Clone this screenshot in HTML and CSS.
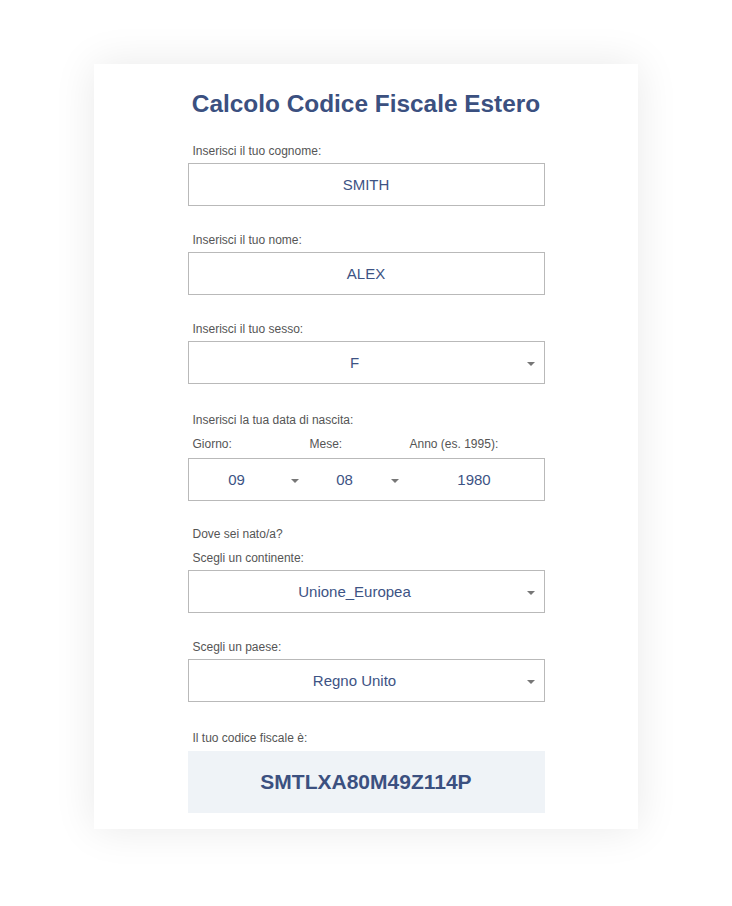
FILE: index.html
```html
<!DOCTYPE html>
<html lang="it">
<head>
<meta charset="utf-8">
<title>Calcolo Codice Fiscale Estero</title>
<link rel="stylesheet" href="styles.css">
</head>
<body>
<div class="page">
  <div class="card">
    <h1 class="title">Calcolo Codice Fiscale Estero</h1>
    <div class="form">
      <div class="group">
        <div class="label">Inserisci il tuo cognome:</div>
        <div class="field">SMITH</div>
      </div>
      <div class="group">
        <div class="label">Inserisci il tuo nome:</div>
        <div class="field">ALEX</div>
      </div>
      <div class="group group-sex">
        <div class="label">Inserisci il tuo sesso:</div>
        <div class="field select"><span class="value">F</span><span class="arrow"></span></div>
      </div>
      <div class="group group-date">
        <div class="label label-top">Inserisci la tua data di nascita:</div>
        <div class="date-labels">
          <div class="label col-d">Giorno:</div>
          <div class="label col-m">Mese:</div>
          <div class="label col-y">Anno (es. 1995):</div>
        </div>
        <div class="field date">
          <div class="col-d sub select"><span class="value">09</span><span class="arrow"></span></div>
          <div class="col-m sub select"><span class="value">08</span><span class="arrow"></span></div>
          <div class="col-y sub"><span class="value">1980</span></div>
        </div>
      </div>
      <div class="group">
        <div class="label label-top">Dove sei nato/a?</div>
        <div class="label">Scegli un continente:</div>
        <div class="field select"><span class="value">Unione_Europea</span><span class="arrow"></span></div>
      </div>
      <div class="group group-country">
        <div class="label">Scegli un paese:</div>
        <div class="field select"><span class="value">Regno Unito</span><span class="arrow"></span></div>
      </div>
      <div class="group last">
        <div class="label label-res">Il tuo codice fiscale è:</div>
        <div class="result">SMTLXA80M49Z114P</div>
      </div>
    </div>
  </div>
</div>
</body>
</html>
```

FILE: styles.css
```css
html, body {
  margin: 0;
  padding: 0;
  background: #ffffff;
}

body {
  font-family: "Liberation Sans", Arial, Helvetica, sans-serif;
  color: #555555;
}

.page {
  padding-top: 64px;
  padding-bottom: 78px;
}

.card {
  width: 544px;
  margin: 0 auto;
  background: #ffffff;
  box-shadow: 0 0 40px rgba(0, 0, 0, 0.09);
  padding: 26px 0 16px;
  box-sizing: border-box;
}

.title {
  margin: 0 0 24px;
  font-size: 24.4px;
  line-height: 28px;
  font-weight: bold;
  color: #3b5080;
  text-align: center;
}

.form {
  width: 357px;
  margin: 0 auto;
}

.group {
  margin-bottom: 25px;
}

.group.group-sex {
  margin-bottom: 27px;
}

.group.group-date {
  margin-bottom: 24px;
}

.group.group-country {
  margin-bottom: 27px;
}

.group.last {
  margin-bottom: 0;
}

.label {
  font-size: 12px;
  line-height: 18px;
  color: #555555;
  padding-left: 5px;
  margin-bottom: 3px;
}

.label-top {
  margin-bottom: 6px;
}

.label-res {
  margin-bottom: 4px;
}

.date-labels {
  display: flex;
}

.date-labels .label {
  margin-bottom: 5px;
}

.col-d { width: 117px; flex: none; box-sizing: border-box; }
.col-m { width: 100px; flex: none; box-sizing: border-box; }
.col-y { flex: 1; box-sizing: border-box; }

.field {
  height: 43px;
  border: 1px solid #b9b9b9;
  box-sizing: border-box;
  display: flex;
  align-items: center;
  justify-content: center;
  font-size: 15px;
  color: #3d5384;
  background: #ffffff;
}

.field.select {
  position: relative;
  justify-content: flex-start;
  padding-right: 23px;
}

.field.select .value,
.sub .value {
  flex: 1;
  text-align: center;
}

.arrow {
  width: 0;
  height: 0;
  border-left: 4px solid transparent;
  border-right: 4px solid transparent;
  border-top: 4px solid #777777;
  position: absolute;
  right: 9px;
  top: 50%;
  margin-top: -1px;
}

.field.date {
  justify-content: flex-start;
  align-items: stretch;
}

.sub {
  display: flex;
  align-items: center;
  position: relative;
}

.sub.select {
  padding-right: 20px;
}

.sub.select .arrow {
  right: 6px;
}

.col-d.sub { width: 116px; }

.result {
  height: 62px;
  background: #eff3f7;
  display: flex;
  align-items: center;
  justify-content: center;
  font-size: 21px;
  font-weight: bold;
  color: #3b5080;
}
```
